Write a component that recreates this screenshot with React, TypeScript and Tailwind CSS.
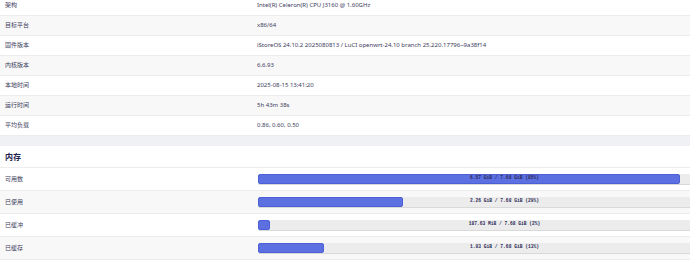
const sysRows: [string, string][] = [
  ["架构", "Intel(R) Celeron(R) CPU J3160 @ 1.60GHz"],
  ["目标平台", "x86/64"],
  ["固件版本", "iStoreOS 24.10.2 2025080813 / LuCI openwrt-24.10 branch 25.220.17796~9a38f14"],
  ["内核版本", "6.6.93"],
  ["本地时间", "2025-08-15 13:41:20"],
  ["运行时间", "5h 43m 38s"],
  ["平均负载", "0.86, 0.60, 0.50"],
];

const memRows: { label: string; pct: number; text: string }[] = [
  { label: "可用数", pct: 85.5, text: "6.57 GiB / 7.68 GiB (85%)" },
  { label: "已使用", pct: 29.4, text: "2.26 GiB / 7.68 GiB (29%)" },
  { label: "已缓冲", pct: 2.4, text: "187.63 MiB / 7.68 GiB (2%)" },
  { label: "已缓存", pct: 13.4, text: "1.03 GiB / 7.68 GiB (13%)" },
];

function Bar({ pct, text }: { pct: number; text: string }) {
  return (
    <div className="relative h-[11px] w-[493px] shrink-0 rounded-[2px] border-b border-[#d9d9d9] bg-[#ececec]">
      <div
        className="h-full rounded-[2px] border border-[#4c5fd6] bg-[#5d70e2]"
        style={{ width: `${pct}%` }}
      />
      <div className="absolute inset-0 flex items-center justify-center font-['Liberation_Mono',monospace] text-[4.6px] font-bold text-[#2a2a55]">
        {text}
      </div>
    </div>
  );
}

export default function App() {
  return (
    <div className="h-[261px] w-[690px] overflow-hidden bg-white font-['Noto_Sans','Noto_Sans_CJK_SC',sans-serif] text-[#3b3b5c]">
      <div className="-mt-[4px]">
        {sysRows.map(([k, v], i) => (
          <div
            key={k}
            className={`flex h-[20px] items-center border-b border-[#ececec] text-[6px] ${
              i % 2 === 1 ? "bg-[#f8f8f8]" : "bg-white"
            }`}
          >
            <div className="w-[257px] shrink-0 pl-[5px]">{k}</div>
            <div className="whitespace-nowrap">{v}</div>
          </div>
        ))}
      </div>

      <div className="h-[10px] bg-[#f0f1f4]" />

      <div className="flex h-[22px] items-center border-b border-[#ededed] pl-[5px] text-[8px] font-bold text-[#1f1f4f]">
        内存
      </div>

      {memRows.map((r, i) => (
        <div
          key={r.label}
          className={`flex h-[23px] items-center border-b border-[#ececec] text-[6px] ${
            i % 2 === 1 ? "bg-[#f8f8f8]" : "bg-white"
          }`}
        >
          <div className="w-[258px] shrink-0 pl-[5px]">{r.label}</div>
          <Bar pct={r.pct} text={r.text} />
        </div>
      ))}
    </div>
  );
}
